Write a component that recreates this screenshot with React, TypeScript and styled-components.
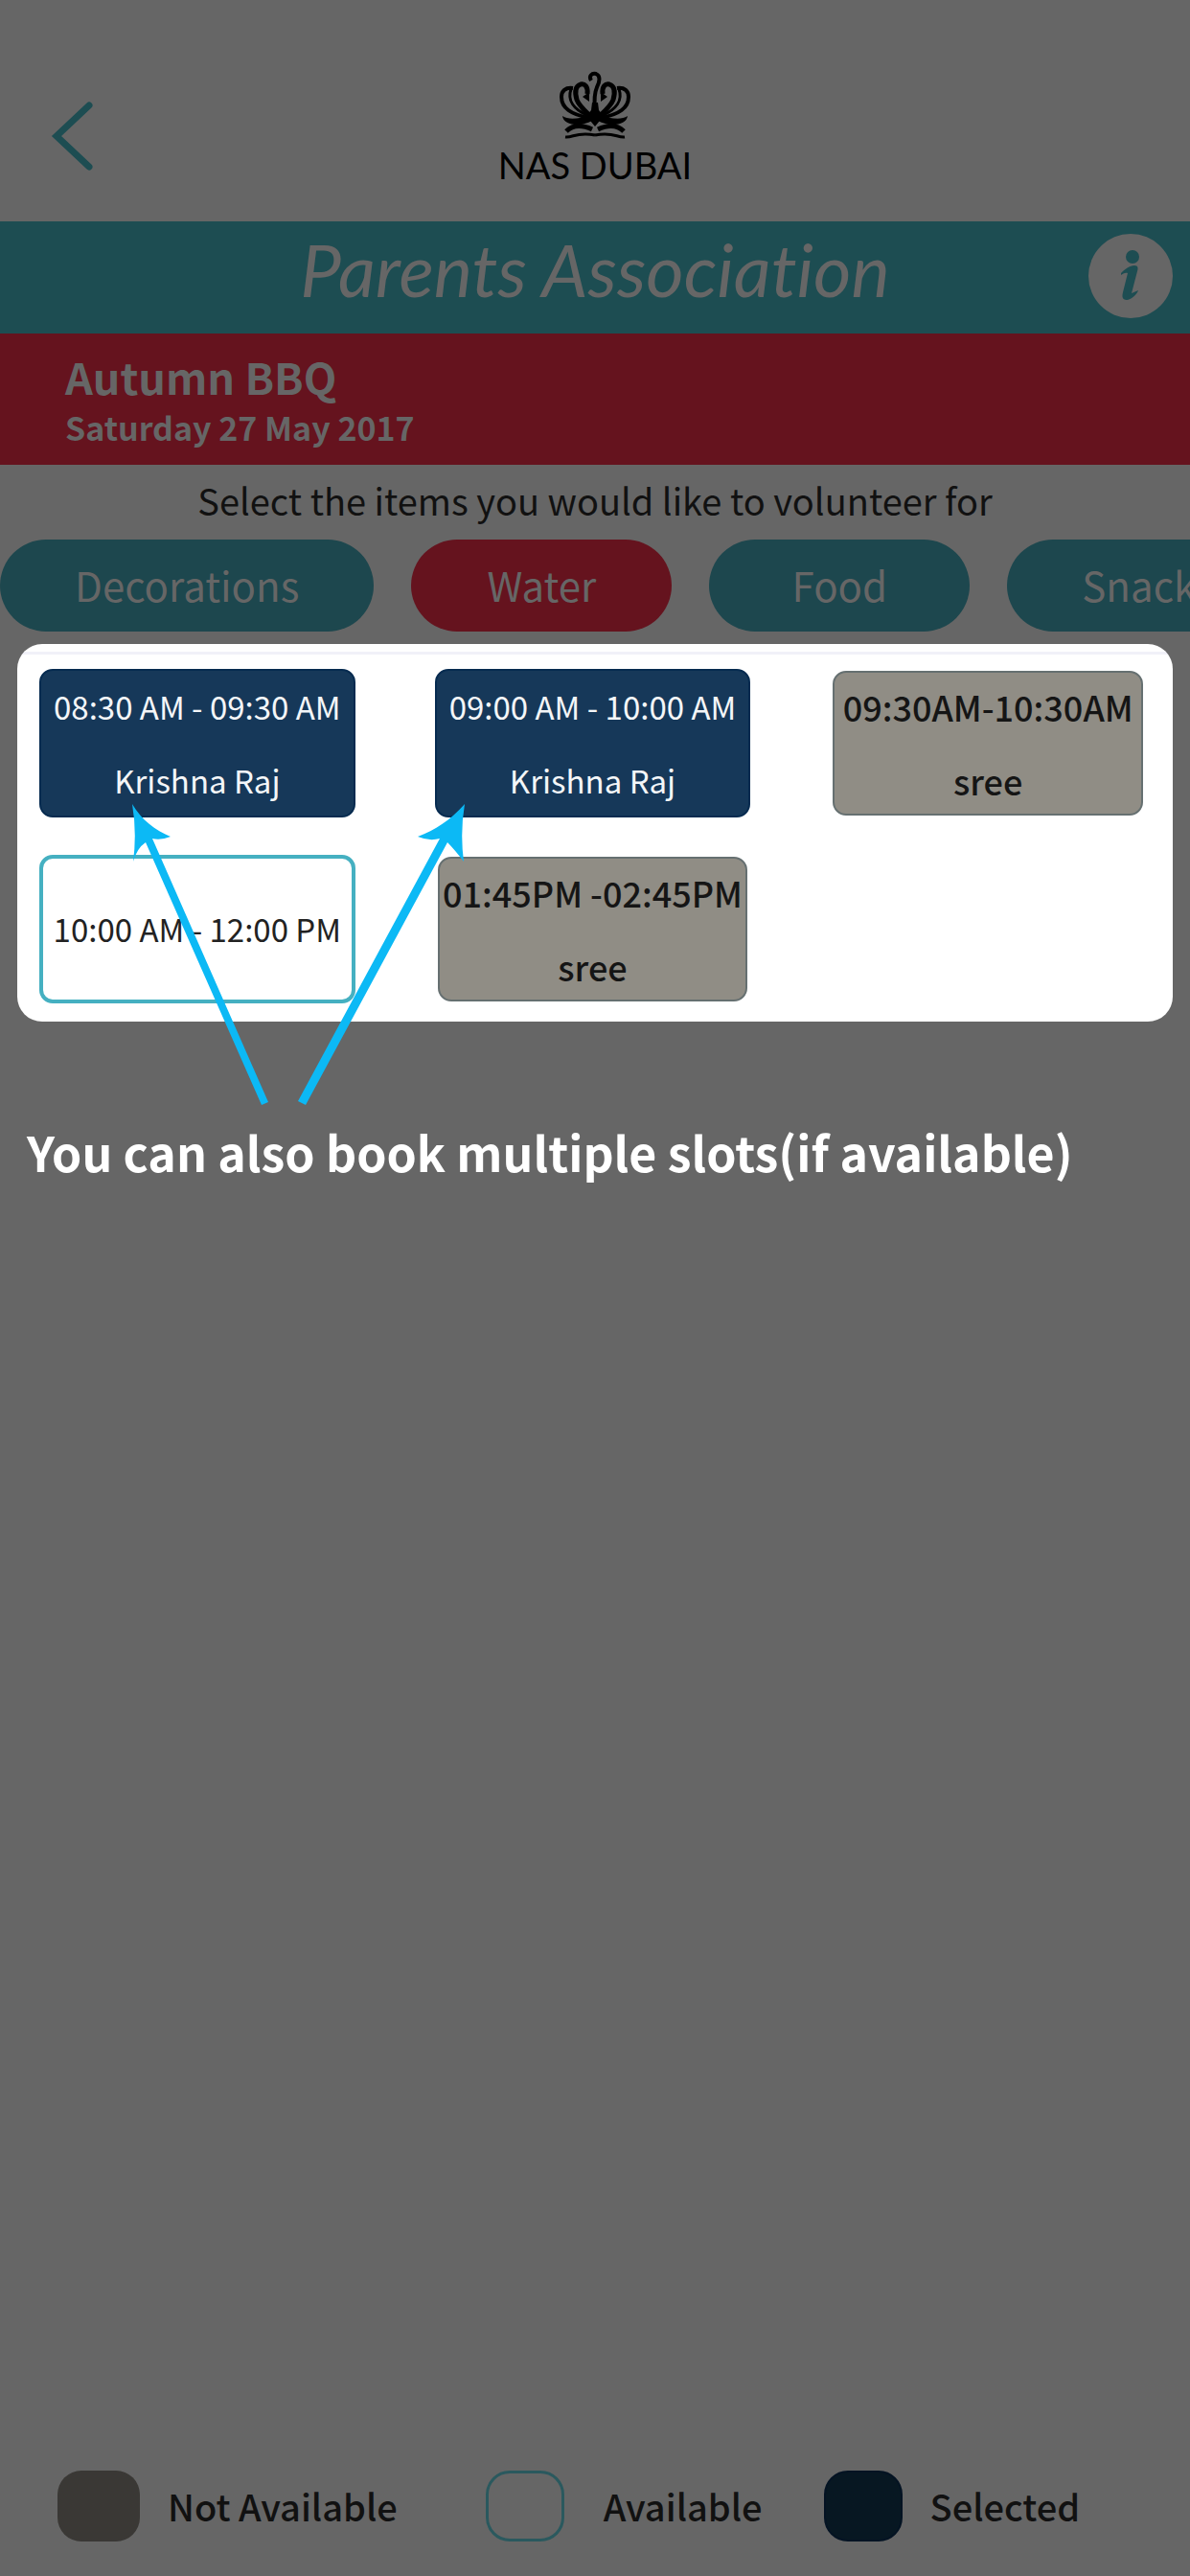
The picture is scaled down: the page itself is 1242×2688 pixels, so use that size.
import React from 'react';
import styled, { createGlobalStyle, css } from 'styled-components';

const dim = {
  page: '#666666',
  teal: '#1d4d52',
  pill: '#1d474e',
  red: '#65131e',
  ink: '#111111',
};

const GlobalStyle = createGlobalStyle`
  *, *::before, *::after { box-sizing: border-box; }
  body {
    margin: 0;
    background: ${dim.page};
    font-family: "Noto Sans CJK SC", "Noto Sans", sans-serif;
    color: ${dim.ink};
  }
  h1, h2, p, ul { margin: 0; padding: 0; }
  button { font: inherit; border: 0; padding: 0; background: none; cursor: pointer; }
`;

const Screen = styled.div`
  min-height: 100vh;
  display: flex;
  flex-direction: column;
  overflow: hidden;
`;

const Header = styled.header`
  display: grid;
  grid-template-columns: 1fr auto 1fr;
  height: 231px;
  padding: 0 50px;
`;

const BackButton = styled.button`
  justify-self: start;
  align-self: start;
  display: flex;
  margin-top: 104px;
`;

const Brand = styled.div`
  display: flex;
  flex-direction: column;
  align-items: center;
  padding-top: 73px;
  color: #000;
`;

const BrandName = styled.span`
  margin-top: 2px;
  font-family: Lato, sans-serif;
  font-size: 38px;
  line-height: 50px;
`;

const TitleBar = styled.div`
  display: grid;
  grid-template-columns: 88px 1fr 88px;
  align-items: center;
  height: 117px;
  padding: 0 18px 4px;
  background: ${dim.teal};
  color: ${dim.page};
`;

const Title = styled.h1`
  grid-column: 2;
  padding-bottom: 14px;
  text-align: center;
  font-family: Lato, sans-serif;
  font-size: 76px;
  font-style: italic;
  font-weight: 400;
  font-variant-ligatures: none;
  line-height: 84px;
`;

const InfoButton = styled.button`
  display: flex;
`;

const EventBar = styled.section`
  height: 137px;
  padding: 16px 68px 0;
  background: ${dim.red};
  color: ${dim.page};
`;

const EventName = styled.h2`
  font-size: 45px;
  line-height: 58px;
  font-weight: 700;
`;

const EventDate = styled.p`
  font-size: 34px;
  line-height: 48px;
  font-weight: 700;
`;

const Prompt = styled.p`
  padding-top: 7px;
  text-align: center;
  font-size: 38px;
  line-height: 60px;
`;

const Categories = styled.nav`
  display: flex;
  gap: 39px;
  margin-top: 11px;
  overflow: hidden;
`;

const Category = styled.button<{ $active?: boolean }>`
  && {
    flex: none;
    min-width: 272px;
    height: 96px;
    padding: 0 78px 4px;
    border-radius: 48px;
    background: ${(p) => (p.$active ? dim.red : dim.pill)};
    color: ${dim.page};
    font-size: 42px;
    font-weight: 400;
  }
`;

const Spotlight = styled.section`
  position: relative;
  margin: 13px 18px 0;
`;

const Panel = styled.ul`
  display: grid;
  grid-template-columns: repeat(3, 1fr);
  gap: 39px 83px;
  padding: 26px 28px 19px 23px;
  border-radius: 26px;
  background: linear-gradient(#f1f1f8, #f1f1f8) 0 8px / 100% 3px no-repeat #fff;
  list-style: none;
`;

type Status = 'selected' | 'available' | 'taken';

const slotLook = {
  selected: css`
    background: #163859;
    border: 2px solid #062b50;
    color: #f4f6f8;
  `,
  available: css`
    background: #fff;
    border: 4px solid #45b0c1;
    color: #222;
  `,
  taken: css`
    margin: 2px 3px;
    background: #908d85;
    border: 2px solid #667071;
    color: #151515;
  `,
};

const SlotItem = styled.li`
  display: flex;
  height: 155px;
`;

const Slot = styled.button<{ $status: Status }>`
  && {
    flex: 1;
    min-width: 0;
    display: flex;
    flex-direction: column;
    align-items: center;
    justify-content: center;
    border-radius: 14px;
    white-space: nowrap;
    font-size: ${(p) => (p.$status === 'taken' ? 36 : 33)}px;
    font-weight: ${(p) => (p.$status === 'taken' ? 500 : 400)};
    line-height: 77px;
    ${(p) => slotLook[p.$status]}
  }
`;

const Arrows = styled.svg`
  position: absolute;
  left: 0;
  top: 0;
  pointer-events: none;
`;

const Hint = styled.p`
  margin-top: 101px;
  padding: 0 28px;
  color: #fff;
  font-size: 50px;
  line-height: 68px;
  font-weight: 700;
`;

const Legend = styled.footer`
  display: flex;
  align-items: center;
  margin-top: auto;
  padding: 0 60px 36px;
  font-size: 38px;
  line-height: 56px;
  font-weight: 500;
  white-space: nowrap;
`;

const LegendItem = styled.div<{ $gap: number }>`
  display: flex;
  align-items: center;
  gap: ${(p) => p.$gap}px;
  &:nth-child(1) { margin-right: 92px; }
  &:nth-child(2) { margin-right: 64px; }
`;

const swatchLook = {
  taken: css`background: #3a3835;`,
  available: css`border: 3px solid #2a595e;`,
  selected: css`background: #071722; border: 2px solid #041323;`,
};

const Swatch = styled.span<{ $status: Status }>`
  flex: none;
  width: ${(p) => (p.$status === 'taken' ? 86 : 82)}px;
  height: 74px;
  border-radius: 25px;
  ${(p) => swatchLook[p.$status]}
`;

const categories = ['Decorations', 'Water', 'Food', 'Snacks'];

const slots: { time: string; name?: string; status: Status }[] = [
  { time: '08:30 AM - 09:30 AM', name: 'Krishna Raj', status: 'selected' },
  { time: '09:00 AM - 10:00 AM', name: 'Krishna Raj', status: 'selected' },
  { time: '09:30AM-10:30AM', name: 'sree', status: 'taken' },
  { time: '10:00 AM - 12:00 PM', status: 'available' },
  { time: '01:45PM -02:45PM', name: 'sree', status: 'taken' },
];

const legend: { label: string; status: Status; gap: number }[] = [
  { label: 'Not Available', status: 'taken', gap: 29 },
  { label: 'Available', status: 'available', gap: 41 },
  { label: 'Selected', status: 'selected', gap: 29 },
];

function Crown() {
  const half = (
    <g fill="none" stroke="currentColor">
      <path d="M14 19C6 18 2 22 2 28C2 40 12 46 30 50" strokeWidth="4" />
      <path d="M12 20C8 31 14 41 30 48" strokeWidth="3" />
      <path d="M29 25C30 17 26 14 22 15C16 17 16 24 18 31C20 37 26 42 33 49" strokeWidth="5" />
      <path d="M31 23l-7 5 7 5z" fill="currentColor" stroke="none" />
      <path d="M3 48c7 5 18 2 31 0v5C22 60 4 58 3 48z" fill="currentColor" stroke="none" />
      <path d="M7 64C14 57 23 57 34 62" strokeWidth="5" />
      <path d="M6 70C14 71 18 64 37 68" strokeWidth="3" />
    </g>
  );
  return (
    <svg width="74" height="72" viewBox="0 0 74 72" aria-hidden="true">
      {half}
      <g transform="translate(74 0) scale(-1 1)">{half}</g>
      <path d="M33 11C30 6 34 3 38 4C43 6 42 12 39 18C36 25 36 32 37 42" fill="none" stroke="currentColor" strokeWidth="4" />
      <path d="M34 34h6l1 8 5 6-9 11-9-11 5-6z" fill="currentColor" />
    </svg>
  );
}

export default function App() {
  return (
    <Screen>
      <GlobalStyle />
      <Header>
        <BackButton aria-label="Back">
          <svg width="50" height="76" viewBox="0 0 50 76" aria-hidden="true">
            <path d="M43 6L9 38L43 70" fill="none" stroke={dim.teal} strokeWidth="7" strokeLinecap="round" />
          </svg>
        </BackButton>
        <Brand>
          <Crown />
          <BrandName>NAS DUBAI</BrandName>
        </Brand>
      </Header>

      <TitleBar>
        <Title>Parents Association</Title>
        <InfoButton aria-label="Information">
          <svg width="88" height="88" viewBox="0 0 88 88" aria-hidden="true">
            <circle cx="44" cy="44" r="44" fill={dim.page} />
            <circle cx="46" cy="24" r="7" fill={dim.teal} />
            <path d="M34 41c4-4 9-8 14-8 4 0 4 3 3 6l-6 23 7-3c-1 4-8 10-12 10-5 0-5-4-4-8l5-20c-3-1-5 1-7 2z" fill={dim.teal} />
          </svg>
        </InfoButton>
      </TitleBar>

      <EventBar>
        <EventName>Autumn BBQ</EventName>
        <EventDate>Saturday 27 May 2017</EventDate>
      </EventBar>

      <Prompt>Select the items you would like to volunteer for</Prompt>
      <Categories aria-label="Volunteer items">
        {categories.map((name) => (
          <Category key={name} $active={name === 'Water'}>{name}</Category>
        ))}
      </Categories>

      <Spotlight>
        <Panel>
          {slots.map((slot) => (
            <SlotItem key={slot.time}>
              <Slot $status={slot.status} disabled={slot.status === 'taken'}>
                <span>{slot.time}</span>
                {slot.name && <span>{slot.name}</span>}
              </Slot>
            </SlotItem>
          ))}
        </Panel>
        <Arrows width="520" height="490" viewBox="0 0 520 490" aria-hidden="true">
          <g fill="#0cb9f5">
            <path d="M120 167C130 184 144 194 160 201Q150 205 141 203L262 478L255 481L134 207Q125 213 121 227Q125 197 120 167Z" />
            <path d="M467 167C452 184 436 194 418 201Q430 206 441 203L293 477L301 481L449 207Q456 214 466 227Q462 197 467 167Z" />
          </g>
        </Arrows>
      </Spotlight>
      <Hint>You can also book multiple slots(if available)</Hint>

      <Legend>
        {legend.map((item) => (
          <LegendItem key={item.label} $gap={item.gap}>
            <Swatch $status={item.status} />
            <span>{item.label}</span>
          </LegendItem>
        ))}
      </Legend>
    </Screen>
  );
}
